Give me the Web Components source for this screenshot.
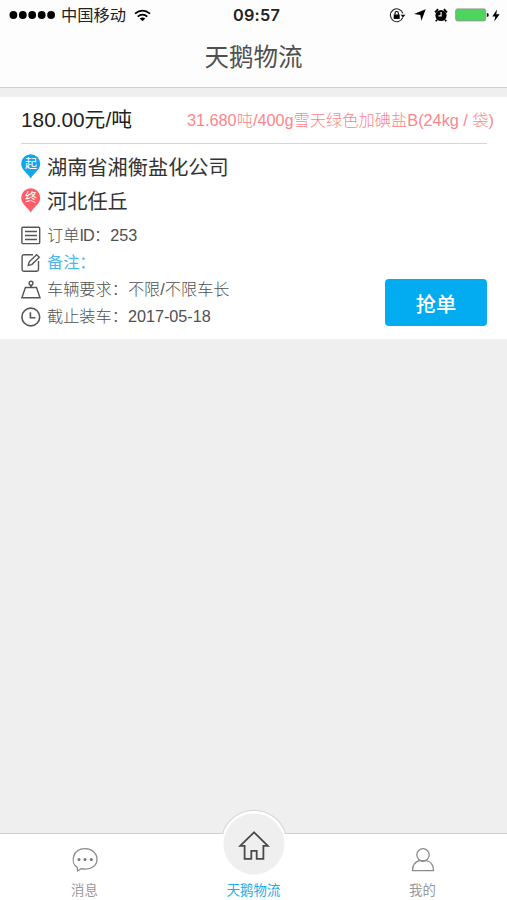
<!DOCTYPE html>
<html lang="zh-CN">
<head>
<meta charset="utf-8">
<title>天鹅物流</title>
<style>
html,body{margin:0;height:100%}
body{font-family:"Liberation Sans","Noto Sans CJK SC",sans-serif;background:#efefef;color:#333}
</style>
</head>
<body>
<app-shell></app-shell>
<script>
const define=(name,html)=>customElements.define(name,class extends HTMLElement{
  constructor(){super();const t=document.createElement('template');t.innerHTML=html;
    this.attachShadow({mode:'open'}).append(t.content.cloneNode(true));}
});

define('status-bar',`<style>
:host{display:grid;grid-template-columns:1fr auto 1fr;align-items:center;height:30px;padding:0 7px 0 9px;color:#222;font-size:16px;line-height:30px;box-sizing:border-box}
.l,.r{display:flex;align-items:center}
.r{justify-content:flex-end}
.c{margin-left:5px;font-size:16.3px}
.time{font:600 16.3px/30px Inter,sans-serif;letter-spacing:.2px;padding-left:4px}
svg{display:block;flex:none}
</style>
<div class="l">
<svg width="47" height="10" viewBox="0 0 47 10" fill="#000"><circle cx="4.4" cy="5" r="3.9"/><circle cx="13.8" cy="5" r="3.9"/><circle cx="23.2" cy="5" r="3.9"/><circle cx="32.7" cy="5" r="3.9"/><circle cx="42.1" cy="5" r="3.9"/></svg>
<span class="c">中国移动</span>
<svg style="margin-left:8px" width="17" height="13" viewBox="0 0 18 13" fill="none" stroke="#000" stroke-width="1.8"><path d="M1 4.6Q9-2.1 17 4.6M3.9 7.8Q9 3.4 14.1 7.8"/><path d="M6.1 9.6Q9 7.5 11.9 9.6L9 12.6z" fill="#000" stroke="none"/></svg>
</div>
<span class="time">09:57</span>
<div class="r">
<svg width="17" height="15" viewBox="0 0 17 15"><path d="M13.8 9.5A6.4 6.4 0 1 1 13.9 5.3" fill="none" stroke="#222" stroke-width="1.1"/><path d="M11.6 6.7h4.8L14 9.6z"/><path d="M4.7 6.5h6v4.4h-6z"/><path d="M6 6.8V5.2a1.7 1.7 0 0 1 3.4 0v1.6" fill="none" stroke="#000" stroke-width="1.1"/></svg>
<svg style="margin-left:8px" width="12" height="12" viewBox="0 0 12 12"><path d="M11.7.3 7.4 11.8 6.3 6 0 5z"/></svg>
<svg style="margin-left:8px" width="14" height="14" viewBox="0 0 14 14"><circle cx="7" cy="7.5" r="5.6"/><path d="M1 4.3 4.1 1.2M13 4.3 9.9 1.2M3 11.8l-1.2 1.5M11 11.8l1.2 1.5" stroke="#000" stroke-width="1.8"/><path d="M7.1 4v3.9H4.4" fill="none" stroke="#fff" stroke-width="1.2"/></svg>
<svg style="margin-left:7px" width="34" height="14" viewBox="0 0 34 14"><rect x=".7" y=".9" width="30" height="12" rx="1.6" fill="#4cd45c" stroke="#9a9a9a"/><path d="M31.8 5q2 0 2 2t-2 2z" fill="#111"/></svg>
<svg style="margin-left:3px" width="8" height="13" viewBox="0 0 8 13"><path d="M5 .5.3 7.4h3L2.2 12.5 7.7 5.3H4.3z"/></svg>
</div>`);

define('title-bar',`<style>
:host{display:block;height:58px;box-sizing:border-box;border-bottom:1px solid #d0d0d0;text-align:center;font-size:24.5px;line-height:56px;color:#505050}
</style><slot></slot>`);

define('map-pin',`<style>
:host{display:inline-grid;width:20px;height:25px;color:#fff;font-size:12px;line-height:21px}
svg,span{grid-area:1/1}span{text-align:center;position:relative}svg{display:block}
:host([kind=end]) path{fill:#ff5d68}
</style><svg width="20" height="25" viewBox="0 0 20 25"><path fill="#12a5e9" d="M9.7.2A9.5 9.5 0 0 1 19.2 9.7C19.2 15.8 13.5 18.2 9.7 24.4 5.9 18.2.2 15.8.2 9.7A9.5 9.5 0 0 1 9.7.2z"/></svg><span><slot></slot></span>`);

define('place-row',`<style>
:host{display:flex;height:34px;gap:6px;font-size:20.2px;line-height:35px;color:#333}
::slotted(map-pin){margin-top:3px}
</style><slot name="pin"></slot><span><slot></slot></span>`);

define('info-row',`<style>
:host{display:flex;align-items:center;height:27.1px;gap:6px;font-size:16.2px;line-height:29px;color:#505050;font-weight:300}
:host([note]){color:#4fb8ea;font-weight:400}
</style><slot name="icon"></slot><span><slot></slot></span>`);

define('primary-button',`<style>
:host{display:block}
button{display:block;width:102px;height:47px;padding:0;border:0;border-radius:4px;background:#03acf0;color:#fff;font:500 20.3px/46px "Noto Sans CJK SC",sans-serif}
</style><button><slot></slot></button>`);

define('order-card',`<style>
:host{display:block;height:242px;box-sizing:border-box;background:#fff;padding:0 20px 0 21px;margin-top:9px}
header{display:flex;justify-content:space-between;height:47px;box-sizing:border-box;border-bottom:1px solid #d4d4d4;line-height:45px;white-space:nowrap}
.price{font-size:20.8px;color:#222}
.goods{font-size:16.25px;color:#ff858c;font-weight:300;margin-right:-7px;line-height:47px}
.places{padding-top:7px;height:71px;box-sizing:content-box}
.bottom{display:flex;justify-content:space-between;align-items:flex-end}
primary-button{margin-bottom:4px}
svg{display:block;flex:none;fill:none;stroke:#555;stroke-width:1.4}
</style>
<header><span class="price">180.00元/吨</span><span class="goods">31.680吨/400g雪天绿色加碘盐B(24kg / 袋)</span></header>
<div class="places">
<place-row><map-pin slot="pin">起</map-pin>湖南省湘衡盐化公司</place-row>
<place-row><map-pin slot="pin" kind="end">终</map-pin>河北任丘</place-row>
</div>
<div class="bottom"><div>
<info-row><svg slot="icon" width="20" height="20" viewBox="0 0 20 20"><rect x=".9" y="1.2" width="17.8" height="16.4" rx="1"/><path d="M4 5.5h12M4 9.5h12M4 13.5h12"/></svg>订单<span style="letter-spacing:-.8px">ID</span>：253</info-row>
<info-row note><svg slot="icon" width="20" height="20" viewBox="0 0 20 20"><path d="M12 1.8H2.8Q1.1 1.8 1.1 3.5v13q0 1.7 1.7 1.7h13q1.7 0 1.7-1.7V8"/><path d="m7.2 12.4 1-3.6L15.6 1.7l2.7 2.6-7.5 7.3z"/></svg>备注：</info-row>
<info-row><svg slot="icon" width="20" height="20" viewBox="0 0 20 20"><path d="M4.4 7.5h11.1L19 17.7H.9z"/><circle cx="10" cy="3.2" r="1.9"/><path d="M10 5.1v2.4" stroke-width="1.8"/></svg>车辆要求：不限/不限车长</info-row>
<info-row><svg slot="icon" width="20" height="20" viewBox="0 0 20 20"><circle cx="9.8" cy="10" r="8.9" stroke-width="1.6"/><path d="M9.4 5.2v5.6h5" stroke-width="1.6"/></svg>截止装车：2017-05-18</info-row>
</div><primary-button>抢单</primary-button></div>`);

define('tab-item',`<style>
:host{display:flex;flex-direction:column;align-items:center;justify-content:flex-end;min-height:0;color:#999;font-size:13.4px;line-height:18px}
:host([active]){color:#22aaea}
</style><slot name="icon"></slot><span><slot></slot></span>`);

define('tab-bar',`<style>
:host{display:grid;grid-template-columns:repeat(3,1fr);grid-template-rows:100%;height:67px;box-sizing:border-box;border-top:1px solid #cfcfcf;background:#fff;margin-top:auto}
svg{display:block;flex:none;fill:none;stroke:#8c8c8c;stroke-width:1.3;margin-bottom:9px}
.home{margin-bottom:6px;overflow:visible}
</style>
<tab-item><svg slot="icon" width="28" height="28" viewBox="0 0 28 28"><path d="M6.2 22.4C-1.2 17.6 1.7 3.7 14 3.7c6.8 0 12 4.4 12 10.5s-5.3 10-12 10c-1.3 0-2.6-.1-3.8-.5L6.6 26z"/><g fill="#777" stroke="none"><circle cx="8" cy="14.5" r="1.5"/><circle cx="14" cy="14.5" r="1.5"/><circle cx="20.3" cy="14.5" r="1.5"/></g></svg>消息</tab-item>
<tab-item active><svg class="home" slot="icon" width="66" height="66" viewBox="0 0 66 66"><path d="M1.5 23.5A33 33 0 0 1 64.5 23.5" fill="#fff" stroke="#d9d9d9"/><circle cx="33" cy="33" r="31.8" fill="#fff" stroke="none"/><circle cx="33" cy="34" r="30.5" fill="#efefef" stroke="none"/><path d="M33 22.3 19.2 35.8H23.6V48.9H30.3V40.8H35.7V48.9H42.4V35.8H46.8z" stroke="#4a4a4a" stroke-width="1.8"/></svg>天鹅物流</tab-item>
<tab-item><svg slot="icon" width="28" height="28" viewBox="0 0 28 28"><circle cx="14" cy="9.8" r="6.2"/><path d="M3.5 25.6q0-8.2 7-10.1Q14 17 17.5 15.5q7 2 7 10.1z"/></svg>我的</tab-item>`);

define('app-shell',`<style>
:host{display:flex;flex-direction:column;height:900px;background:#efefef;overflow:hidden}
.top{background:#fdfdfd}
</style>
<div class="top"><status-bar></status-bar><title-bar>天鹅物流</title-bar></div>
<order-card></order-card>
<tab-bar></tab-bar>`);
</script>
</body>
</html>
